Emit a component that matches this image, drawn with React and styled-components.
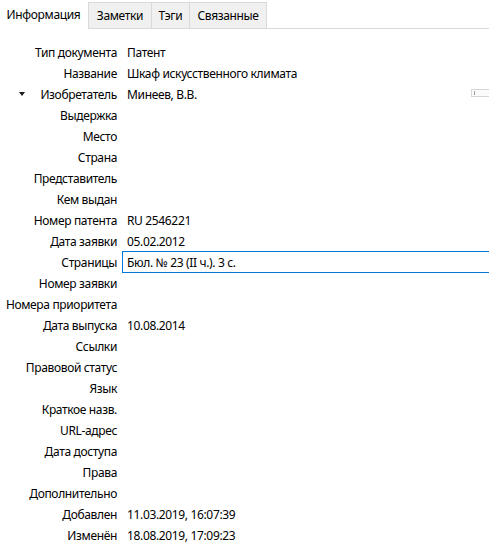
import React from "react";
import styled, { createGlobalStyle } from "styled-components";

const GlobalStyle = createGlobalStyle`
  html, body {
    margin: 0;
    padding: 0;
    background: #ffffff;
    overflow: hidden;
  }
  body {
    font-family: "Noto Sans", "Liberation Sans", sans-serif;
    font-size: 12px;
    letter-spacing: -0.35px;
    color: #000;
  }
`;

const Pane = styled.div`
  width: 489px;
  height: 558px;
  display: flex;
  flex-direction: column;
`;

const TabBar = styled.div`
  display: flex;
  align-items: flex-end;
  height: 28px;
  border-bottom: 1px solid #d9d9d9;
`;

const Tab = styled.div`
  box-sizing: border-box;
  height: ${(p) => (p.active ? "29px" : "26px")};
  margin-bottom: ${(p) => (p.active ? "-1px" : "0")};
  width: ${(p) => p.w}px;
  display: flex;
  align-items: center;
  justify-content: center;
  padding-bottom: ${(p) => (p.active ? "2px" : "0")};
  background: ${(p) => (p.active ? "#ffffff" : "#f0f0f0")};
  border: 1px solid ${(p) => (p.active ? "transparent" : "#d9d9d9")};
  border-bottom: none;
  border-left: ${(p) => (p.first ? "1px solid #d9d9d9" : "none")};
  white-space: nowrap;
`;

const Fields = styled.div`
  padding-top: 12px;
  display: flex;
  flex-direction: column;
`;

const Row = styled.div`
  display: grid;
  grid-template-columns: 117px 1fr;
  column-gap: 5px;
  height: 21px;
  align-items: center;
  position: relative;
`;

const Label = styled.div`
  text-align: right;
  white-space: nowrap;
`;

const Toggle = styled.span`
  position: absolute;
  left: 19px;
  top: 9px;
  width: 0;
  height: 0;
  border-left: 3.5px solid transparent;
  border-right: 3.5px solid transparent;
  border-top: 4px solid #1a1a1a;
`;

const Value = styled.div`
  box-sizing: border-box;
  height: 22px;
  display: flex;
  align-items: center;
  padding-left: 4px;
  margin-right: ${(p) => (p.editing ? "-4px" : "0")};
  border: 1px solid ${(p) => (p.editing ? "#0078d7" : "transparent")};
  white-space: nowrap;
`;

const CreatorSwitch = styled.span`
  position: absolute;
  right: -2px;
  top: 6px;
  width: 18px;
  height: 6px;
  border: 1px solid #d6d6d6;
  background: #fbfbfb;
  &::before {
    content: "";
    position: absolute;
    left: 2px;
    top: 1px;
    width: 1px;
    height: 4px;
    background: #a0a0a0;
  }
`;

const tabs = [
  { name: "Информация", w: 88 },
  { name: "Заметки", w: 64 },
  { name: "Тэги", w: 38 },
  { name: "Связанные", w: 77 },
];

const fields = [
  ["Тип документа", "Патент"],
  ["Название", "Шкаф искусственного климата"],
  ["Изобретатель", "Минеев, В.В.", "creator"],
  ["Выдержка", ""],
  ["Место", ""],
  ["Страна", ""],
  ["Представитель", ""],
  ["Кем выдан", ""],
  ["Номер патента", "RU 2546221"],
  ["Дата заявки", "05.02.2012"],
  ["Страницы", "Бюл. № 23 (II ч.). 3 с.", "editing"],
  ["Номер заявки", ""],
  ["Номера приоритета", ""],
  ["Дата выпуска", "10.08.2014"],
  ["Ссылки", ""],
  ["Правовой статус", ""],
  ["Язык", ""],
  ["Краткое назв.", ""],
  ["URL-адрес", ""],
  ["Дата доступа", ""],
  ["Права", ""],
  ["Дополнительно", ""],
  ["Добавлен", "11.03.2019, 16:07:39"],
  ["Изменён", "18.08.2019, 17:09:23"],
];

const App = () => {
  return (
    <>
      <GlobalStyle />
      <Pane>
        <TabBar>
          {tabs.map((t, i) => (
            <Tab key={t.name} w={t.w} active={i === 0} first={i === 1}>
              {t.name}
            </Tab>
          ))}
        </TabBar>
        <Fields>
          {fields.map(([label, value, kind]) => (
            <Row key={label}>
              {kind === "creator" && <Toggle />}
              <Label>{label}</Label>
              <Value editing={kind === "editing"}>{value}</Value>
              {kind === "creator" && <CreatorSwitch />}
            </Row>
          ))}
        </Fields>
      </Pane>
    </>
  );
};

export default App;
